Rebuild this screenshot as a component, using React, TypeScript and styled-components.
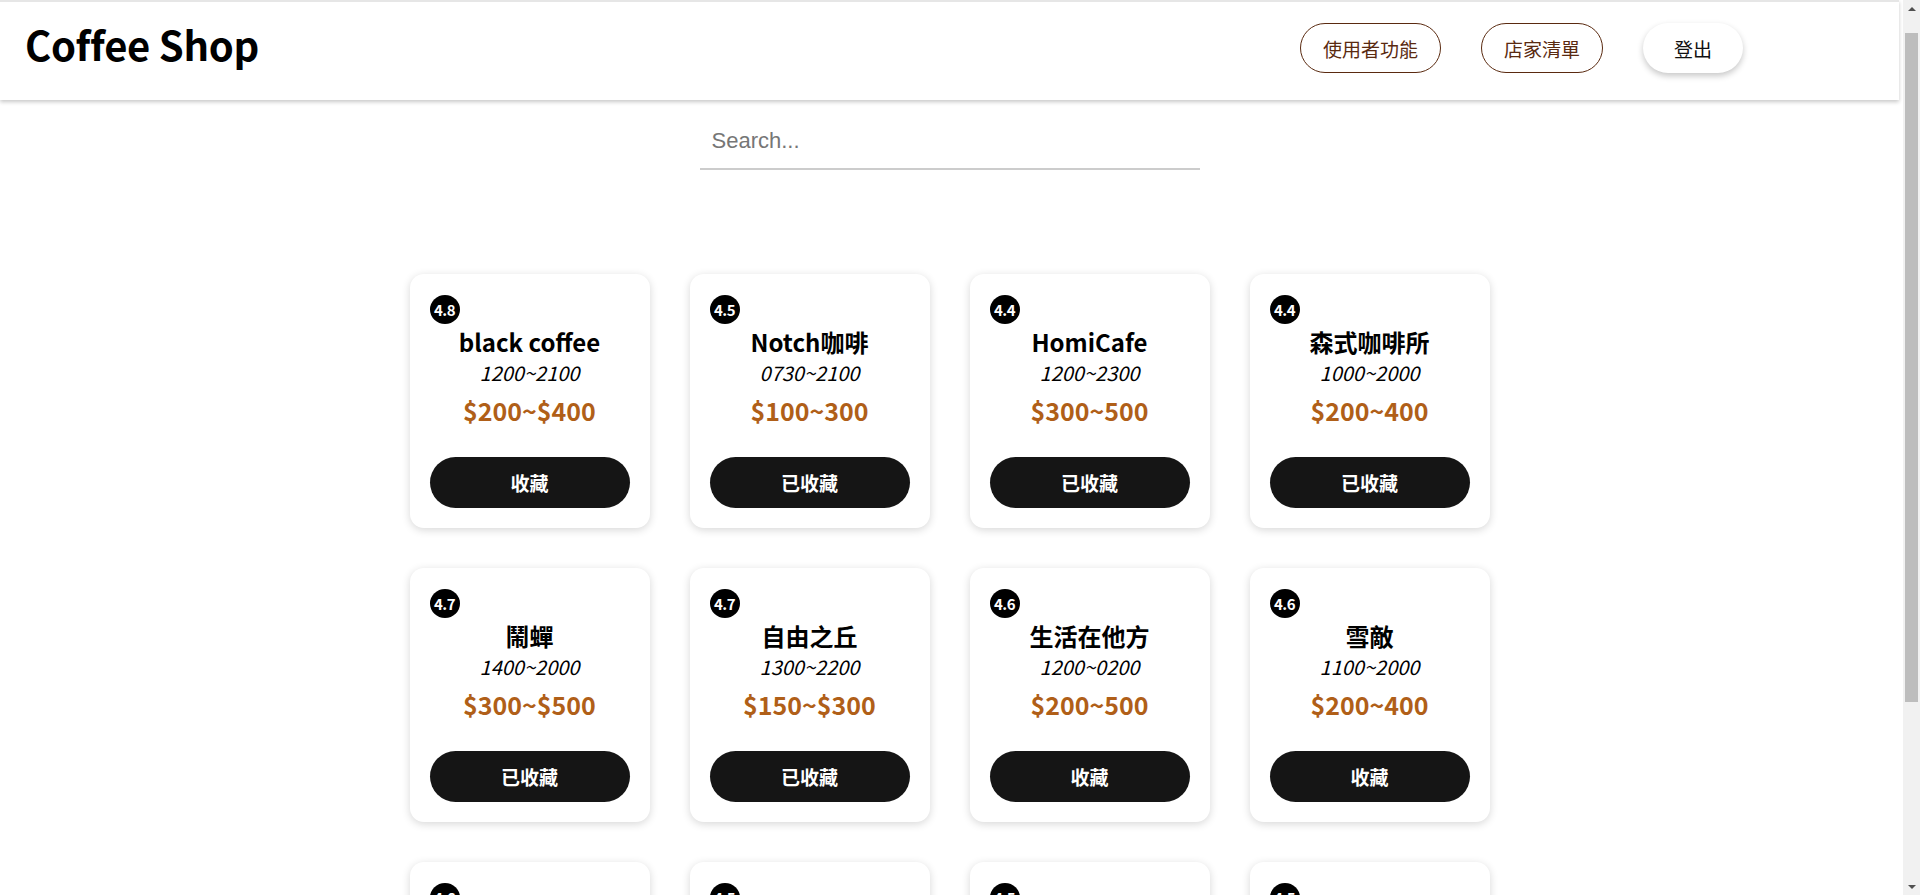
import React from "react";
import styled, { createGlobalStyle } from "styled-components";

const GlobalStyle = createGlobalStyle`
  html, body {
    margin: 0;
    padding: 0;
    background: #ffffff;
    overflow-x: hidden;
  }
  body {
    font-family: "Noto Sans CJK TC", "Noto Sans", sans-serif;
    color: #000;
  }
  * { box-sizing: border-box; }
`;

const Page = styled.div`
  width: calc(100vw - 21px);
`;

const Header = styled.header`
  height: 100px;
  border-top: 2px solid #e6e6e6;
  padding: 0 156px 6px 25px;
  display: flex;
  align-items: center;
  justify-content: space-between;
  background: #fff;
  box-shadow: 0 2px 4px rgba(0, 0, 0, 0.22);
  position: relative;
  z-index: 1;
`;

const Title = styled.h1`
  margin: 0 0 8px;
  font-family: "Noto Sans CJK TC", sans-serif;
  font-weight: 700;
  font-size: 40px;
  line-height: 1.2;
  letter-spacing: -0.3px;
`;

const Nav = styled.nav`
  display: flex;
  align-items: center;
  gap: 40px;
`;

const NavButton = styled.button<{ $variant?: "outline" | "raised" }>`
  height: 50px;
  min-width: 100px;
  padding: 0 22px;
  border-radius: 25px;
  font-family: "Noto Sans CJK TC", sans-serif;
  font-size: 19px;
  font-weight: 400;
  cursor: pointer;
  background: #fff;
  border: ${(p) => (p.$variant === "raised" ? "none" : "1px solid #5a2a10")};
  color: ${(p) => (p.$variant === "raised" ? "#111" : "#5a2a10")};
  box-shadow: ${(p) =>
    p.$variant === "raised" ? "0 3px 6px rgba(0,0,0,0.22)" : "none"};
`;

const SearchWrap = styled.div`
  display: flex;
  justify-content: center;
  margin-top: 14px;
`;

const SearchInput = styled.input`
  width: 500px;
  height: 56px;
  padding: 0 12px;
  border: none;
  border-bottom: 2px solid #cccccc;
  outline: none;
  font-family: "Liberation Sans", Arial, sans-serif;
  font-size: 22px;
  color: #333;
  background: transparent;
  &::placeholder {
    color: #767676;
  }
`;

const Grid = styled.main`
  display: grid;
  grid-template-columns: repeat(4, 240px);
  gap: 40px;
  justify-content: center;
  margin-top: 104px;
  padding-bottom: 12px;
`;

const Card = styled.div`
  height: 254px;
  background: #fff;
  border-radius: 14px;
  box-shadow: 0 2px 9px rgba(0, 0, 0, 0.16);
  padding: 21px 20px 18px;
  display: flex;
  flex-direction: column;
  align-items: center;
`;

const Badge = styled.span`
  align-self: flex-start;
  width: 30px;
  height: 29px;
  border-radius: 50%;
  background: #000;
  color: #fff;
  font-size: 15px;
  font-weight: 700;
  letter-spacing: -0.6px;
  display: flex;
  align-items: center;
  justify-content: center;
`;

const ShopName = styled.h2`
  margin: 2px 0 0;
  font-size: 24px;
  font-weight: 700;
  line-height: 32px;
  text-align: center;
  white-space: nowrap;
`;

const Hours = styled.p`
  margin: 0;
  font-size: 20px;
  font-style: italic;
  font-weight: 400;
  line-height: 29px;
`;

const Price = styled.p`
  margin: 7px 0 0;
  font-size: 25px;
  font-weight: 700;
  line-height: 32px;
  color: #b05f18;
`;

const FavButton = styled.button`
  margin-top: 31px;
  width: 200px;
  height: 51px;
  border: none;
  border-radius: 26px;
  background: #151515;
  color: #fff;
  font-family: "Noto Sans CJK TC", sans-serif;
  font-size: 19px;
  font-weight: 700;
  cursor: pointer;
`;

const Scrollbar = styled.div`
  position: fixed;
  top: 0;
  right: 0;
  width: 17px;
  height: 100vh;
  background: #f1f1f1;
  display: flex;
  flex-direction: column;
  z-index: 5;
`;

const ScrollArrow = styled.div<{ $down?: boolean }>`
  height: 17px;
  flex: none;
  display: flex;
  align-items: center;
  justify-content: center;
  &::before {
    content: "";
    width: 0;
    height: 0;
    border-left: 4px solid transparent;
    border-right: 4px solid transparent;
    ${(p) =>
      p.$down
        ? "border-top: 4px solid #505050;"
        : "border-bottom: 4px solid #505050;"}
  }
`;

const ScrollTrack = styled.div`
  flex: 1;
  padding: 16px 2px 0;
`;

const ScrollThumb = styled.div`
  height: 669px;
  background: #bdbdbd;
`;

type Shop = {
  rating: string;
  name: string;
  hours: string;
  price: string;
  saved: boolean;
};

const shops: Shop[] = [
  { rating: "4.8", name: "black coffee", hours: "1200~2100", price: "$200~$400", saved: false },
  { rating: "4.5", name: "Notch咖啡", hours: "0730~2100", price: "$100~300", saved: true },
  { rating: "4.4", name: "HomiCafe", hours: "1200~2300", price: "$300~500", saved: true },
  { rating: "4.4", name: "森式咖啡所", hours: "1000~2000", price: "$200~400", saved: true },
  { rating: "4.7", name: "鬧蟬", hours: "1400~2000", price: "$300~$500", saved: true },
  { rating: "4.7", name: "自由之丘", hours: "1300~2200", price: "$150~$300", saved: true },
  { rating: "4.6", name: "生活在他方", hours: "1200~0200", price: "$200~500", saved: false },
  { rating: "4.6", name: "雪敵", hours: "1100~2000", price: "$200~400", saved: false },
  { rating: "4.6", name: "小路咖啡", hours: "1000~1800", price: "$150~300", saved: false },
  { rating: "4.5", name: "Cafe Flâneur", hours: "0900~1800", price: "$200~400", saved: false },
  { rating: "4.5", name: "路邊咖啡", hours: "1100~2100", price: "$100~250", saved: false },
  { rating: "4.5", name: "晨光咖啡", hours: "0800~1700", price: "$150~350", saved: false },
];

export default function App() {
  return (
    <>
      <GlobalStyle />
      <Page>
        <Header>
          <Title>Coffee Shop</Title>
          <Nav>
            <NavButton>使用者功能</NavButton>
            <NavButton>店家清單</NavButton>
            <NavButton $variant="raised">登出</NavButton>
          </Nav>
        </Header>
        <SearchWrap>
          <SearchInput placeholder="Search..." />
        </SearchWrap>
        <Grid>
          {shops.map((s, i) => (
            <Card key={i}>
              <Badge>{s.rating}</Badge>
              <ShopName>{s.name}</ShopName>
              <Hours>{s.hours}</Hours>
              <Price>{s.price}</Price>
              <FavButton>{s.saved ? "已收藏" : "收藏"}</FavButton>
            </Card>
          ))}
        </Grid>
      </Page>
      <Scrollbar>
        <ScrollArrow />
        <ScrollTrack>
          <ScrollThumb />
        </ScrollTrack>
        <ScrollArrow $down />
      </Scrollbar>
    </>
  );
}
